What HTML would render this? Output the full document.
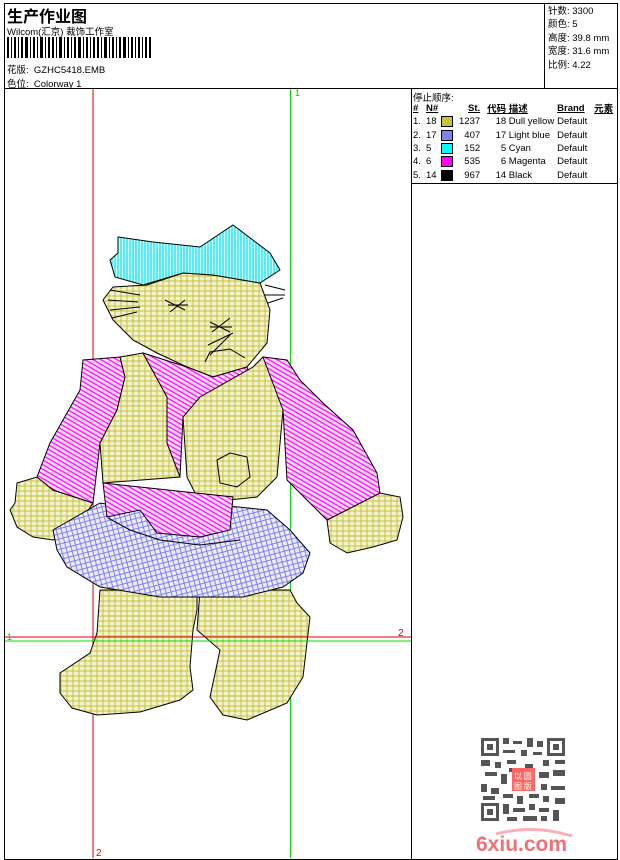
<!DOCTYPE html>
<html><head><meta charset="utf-8"><style>
body{margin:0;width:620px;height:860px;background:#fff;position:relative;overflow:hidden;font-family:"Liberation Sans","Noto Sans CJK SC",sans-serif;font-size:10px;color:#000}
.a{position:absolute;white-space:nowrap}
.b{position:absolute;border:1px solid #000;box-sizing:border-box}
table{border-collapse:collapse;font-size:9.5px}
td{padding:0;height:13.4px}
.sw{display:inline-block;width:10px;height:9px;border:1px solid #000;vertical-align:middle}
</style></head><body>
<div class="b" style="left:4px;top:3px;width:614px;height:857px;border-width:1.5px"></div>
<div class="a" style="left:4px;top:88px;width:614px;height:1px;background:#000"></div>
<div class="a" style="left:544px;top:3px;width:1px;height:86px;background:#000"></div>
<div class="a" style="left:411px;top:88px;width:1px;height:772px;background:#000"></div>
<div class="a" style="left:411px;top:183px;width:207px;height:1px;background:#000"></div>
<div class="a" style="left:7px;top:3px;font-size:16px;font-weight:bold">生产作业图</div>
<div class="a" style="left:7px;top:24px;font-size:9.5px">Wilcom(汇京) 裁饰工作室</div>
<svg class="a" style="left:7px;top:37px" width="145" height="21"><g fill="#000">
<rect x="0" y="0" width="2" height="22"/><rect x="4" y="0" width="1" height="22"/><rect x="7" y="0" width="2" height="22"/><rect x="11" y="0" width="1" height="22"/><rect x="14" y="0" width="2" height="22"/><rect x="18" y="0" width="3" height="22"/><rect x="23" y="0" width="1" height="22"/><rect x="26" y="0" width="2" height="22"/><rect x="30" y="0" width="1" height="22"/><rect x="33" y="0" width="3" height="22"/><rect x="38" y="0" width="1" height="22"/><rect x="41" y="0" width="2" height="22"/><rect x="45" y="0" width="2" height="22"/><rect x="49" y="0" width="1" height="22"/><rect x="52" y="0" width="3" height="22"/><rect x="57" y="0" width="1" height="22"/><rect x="60" y="0" width="2" height="22"/><rect x="64" y="0" width="1" height="22"/><rect x="67" y="0" width="2" height="22"/><rect x="71" y="0" width="3" height="22"/><rect x="76" y="0" width="1" height="22"/><rect x="79" y="0" width="2" height="22"/><rect x="83" y="0" width="1" height="22"/><rect x="86" y="0" width="2" height="22"/><rect x="90" y="0" width="2" height="22"/><rect x="94" y="0" width="1" height="22"/><rect x="97" y="0" width="3" height="22"/><rect x="102" y="0" width="1" height="22"/><rect x="105" y="0" width="2" height="22"/><rect x="109" y="0" width="1" height="22"/><rect x="112" y="0" width="2" height="22"/><rect x="116" y="0" width="3" height="22"/><rect x="121" y="0" width="1" height="22"/><rect x="124" y="0" width="2" height="22"/><rect x="128" y="0" width="1" height="22"/><rect x="131" y="0" width="2" height="22"/><rect x="135" y="0" width="1" height="22"/><rect x="138" y="0" width="2" height="22"/><rect x="142" y="0" width="2" height="22"/>
</g></svg>
<div class="a" style="left:7px;top:62px;font-size:9.5px">花版:&nbsp; GZHC5418.EMB</div>
<div class="a" style="left:7px;top:76px;font-size:9.5px">色位:&nbsp; Colorway 1</div>
<div class="a" style="left:548px;top:5px;font-size:9.5px;line-height:13.4px">针数: 3300<br>颜色: 5<br>高度: 39.8 mm<br>宽度: 31.6 mm<br>比例: 4.22</div>
<div class="a" style="left:413px;top:90px;font-size:9.5px">停止顺序:</div>
<table class="a" style="left:413px;top:101px">
<tr style="font-weight:bold;text-decoration:underline"><td style="width:13px">#</td><td style="width:15px">N#</td><td style="width:18px"></td><td style="width:20px;text-align:right">St.</td><td style="width:26px;text-align:right">代码</td><td style="width:51px">&nbsp;描述</td><td style="width:37px">Brand</td><td>元素</td></tr>
<tr><td>1.</td><td>18</td><td><span class="sw" style="background:#c8c43a"></span></td><td style="text-align:right">1237</td><td style="text-align:right">18</td><td>&nbsp;Dull yellow</td><td>Default</td><td></td></tr>
<tr><td>2.</td><td>17</td><td><span class="sw" style="background:#8080f0"></span></td><td style="text-align:right">407</td><td style="text-align:right">17</td><td>&nbsp;Light blue</td><td>Default</td><td></td></tr>
<tr><td>3.</td><td>5</td><td><span class="sw" style="background:#00ffff"></span></td><td style="text-align:right">152</td><td style="text-align:right">5</td><td>&nbsp;Cyan</td><td>Default</td><td></td></tr>
<tr><td>4.</td><td>6</td><td><span class="sw" style="background:#ff00ff"></span></td><td style="text-align:right">535</td><td style="text-align:right">6</td><td>&nbsp;Magenta</td><td>Default</td><td></td></tr>
<tr><td>5.</td><td>14</td><td><span class="sw" style="background:#000"></span></td><td style="text-align:right">967</td><td style="text-align:right">14</td><td>&nbsp;Black</td><td>Default</td><td></td></tr>
</table>
<svg class="a" style="left:0;top:0" width="411" height="860">
<defs>
<pattern id="y" width="6" height="5" patternUnits="userSpaceOnUse"><rect width="6" height="5" fill="#f2f1d0"/><path d="M0 1H6M1 0V5" stroke="#c8c43a" stroke-width="1"/></pattern>
<pattern id="m" width="4" height="4" patternUnits="userSpaceOnUse" patternTransform="rotate(30)"><rect width="4" height="4" fill="#fdd8fa"/><path d="M0 1H4" stroke="#ff00ff" stroke-width="1.2"/></pattern>
<pattern id="bl" width="5" height="5" patternUnits="userSpaceOnUse" patternTransform="rotate(-15)"><rect width="5" height="5" fill="#ebebfd"/><path d="M0 1H5M2 0V5" stroke="#8080f0" stroke-width="1"/></pattern>
<pattern id="c" width="3" height="5" patternUnits="userSpaceOnUse"><rect width="3" height="5" fill="#d5fbfc"/><path d="M1 0V5" stroke="#00e5f0" stroke-width="1.2"/></pattern>
</defs>
<line x1="93" y1="89" x2="93" y2="858" stroke="#d00" stroke-width="1"/>
<line x1="290.5" y1="89" x2="290.5" y2="858" stroke="#0d0" stroke-width="1"/>
<g stroke="#000" stroke-width="1">
<polygon fill="url(#y)" points="113,287 147,285 183,273 213,275 260,283 270,310 267,343 247,367 213,377 187,367 157,353 133,340 113,320 103,300"/>
<polygon fill="url(#c)" points="118,237 153,242 200,247 233,225 270,253 280,270 260,283 213,275 183,273 143,285 115,277 110,260 118,253"/>
<polygon fill="url(#y)" points="17,483 37,477 53,490 93,503 77,527 53,540 33,537 17,527 10,510 15,503"/>
<polygon fill="url(#y)" points="327,520 380,493 400,497 403,517 397,540 373,547 347,553 330,543"/>
<polygon fill="url(#y)" points="100,590 197,590 197,610 193,630 190,667 193,690 180,700 140,712 97,715 72,708 60,693 60,673 90,653 97,633"/>
<polygon fill="url(#y)" points="200,590 290,590 297,603 310,617 303,677 287,703 247,720 223,715 210,697 213,683 220,650 197,630"/>
<polygon fill="url(#bl)" points="53,530 100,503 140,510 200,503 267,510 290,530 310,553 303,573 283,587 243,597 160,597 100,587 67,567 57,550"/>
<polygon fill="url(#m)" points="83,360 120,357 125,377 117,410 100,443 93,503 53,490 37,477 50,443 80,390"/>
<polygon fill="url(#y)" points="120,357 143,353 167,397 167,443 180,477 103,483 100,443 117,410 125,377"/>
<polygon fill="url(#m)" points="143,353 187,367 213,377 247,367 253,383 207,397 183,417 180,477 167,443 167,397"/>
<polygon fill="url(#y)" points="200,397 253,367 263,357 287,367 283,410 277,477 257,497 200,503 187,477 183,417"/>
<polygon fill="url(#m)" points="263,357 287,360 300,380 323,403 353,430 377,473 380,493 327,520 287,480 283,410"/>
<polygon fill="url(#m)" points="103,483 233,497 230,530 200,537 157,533 140,510 107,517"/>
<polygon fill="url(#y)" points="217,460 230,453 247,457 250,477 237,487 220,483"/>
<polyline fill="none" points="205,362 210,352 230,349 245,358"/>
<polyline fill="none" points="108,518 130,530 160,540 200,545 240,540"/>
</g>
<g stroke="#000" stroke-width="1" fill="none">
<path d="M165 300l20 10M170 312l15-12M168 305h20M210 322l20 10M212 332l18-14M210 327h22M208 345l25-12M210 355l20-20M110 290l30 5M108 300l30 2M110 310l30-3M112 318l25-6M265 285l20 5M265 295l20 0M268 303l15-5"/>
</g>
<line x1="5" y1="637" x2="411" y2="637" stroke="#d00"/>
<line x1="5" y1="641" x2="411" y2="641" stroke="#0d0"/>
<text x="7" y="640" fill="#0c0" font-size="9" font-family="Liberation Sans">1</text>
<text x="295" y="96" fill="#0c0" font-size="9" font-family="Liberation Sans">1</text>
<text x="398" y="636" fill="#d00" font-size="10" font-family="Liberation Sans">2</text>
<text x="96" y="856" fill="#d00" font-size="10" font-family="Liberation Sans">2</text>
</svg>
<svg class="a" style="left:481px;top:738px" width="85" height="83">
<rect width="85" height="83" fill="#fff"/>
<g fill="#555">
<rect x="0" y="0" width="18" height="18"/><rect x="3" y="3" width="12" height="12" fill="#fff"/><rect x="6" y="6" width="6" height="6"/>
<rect x="66" y="0" width="18" height="18"/><rect x="69" y="3" width="12" height="12" fill="#fff"/><rect x="72" y="6" width="6" height="6"/>
<rect x="0" y="65" width="18" height="18"/><rect x="3" y="68" width="12" height="12" fill="#fff"/><rect x="6" y="71" width="6" height="6"/>
<path d="M22 0h6v6h-6zM32 3h9v3h-9zM46 0h6v9h-6zM56 3h6v6h-6zM22 12h12v3h-12zM40 12h6v6h-6zM52 14h9v3h-9zM0 22h9v6h-9zM14 24h6v6h-6zM26 22h9v4h-9zM62 22h6v6h-6zM74 22h10v4h-10zM4 34h12v4h-12zM20 36h6v10h-6zM58 34h10v6h-10zM72 32h12v6h-12zM0 46h6v8h-6zM10 50h8v6h-8zM60 46h6v6h-6zM70 48h14v4h-14zM2 58h12v4h-12zM22 56h10v4h-10zM36 58h6v8h-6zM48 56h10v4h-10zM62 58h6v6h-6zM74 60h10v6h-10zM22 66h6v10h-6zM32 70h12v4h-12zM48 66h6v6h-6zM58 70h10v4h-10zM72 72h6v11h-6zM26 79h10v4h-10zM42 78h14v5h-14zM60 78h6v5h-6zM28 30h8v4h-8zM44 26h8v6h-8z"/>
</g>
<rect x="31" y="30" width="23" height="23" fill="#f66"/>
<text x="33" y="41" fill="#fff" font-size="8" font-family="Noto Sans CJK SC">以 圆</text>
<text x="33" y="51" fill="#fff" font-size="8" font-family="Noto Sans CJK SC">图 版</text>
</svg>
<svg class="a" style="left:474px;top:826px" width="104" height="28">
<path d="M22 8Q60-2 98 10" stroke="#f9b0b8" stroke-width="3" fill="none"/>
<text x="2" y="25" fill="#f07078" font-size="21" font-weight="bold" font-family="Liberation Sans">6xiu.com</text>
</svg>
</body></html>
